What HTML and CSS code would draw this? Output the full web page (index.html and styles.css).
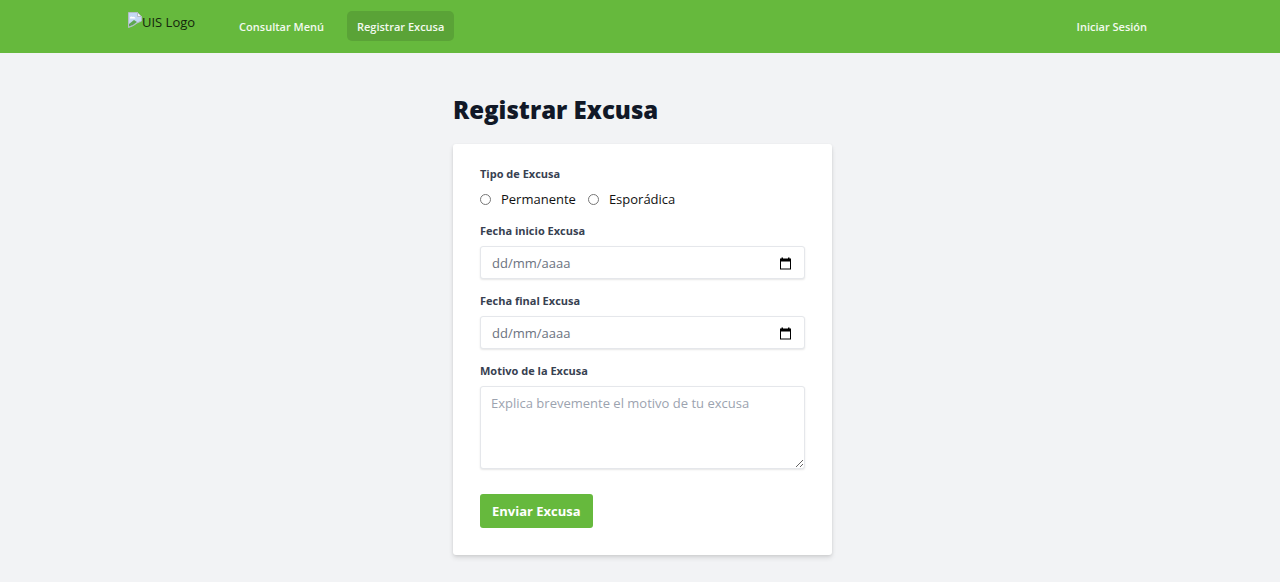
FILE: index.html
```html
<!DOCTYPE html>
<html lang="es">
<head>
<meta charset="utf-8">
<meta name="viewport" content="width=device-width, initial-scale=1">
<title>Registrar Excusa</title>
<link rel="stylesheet" href="styles.css">
</head>
<body>
<header class="header">
  <a class="logo" href="#">
    <svg class="logo-icon" viewBox="0 0 14 16" aria-hidden="true">
      <path d="M0.5 0.5H9.5L13.5 4.5V9L9 11L5.5 13.5L0.5 15.5Z" fill="#c4d8f5" stroke="#b5bdc5"/>
      <path d="M9.5 0.5V4.5H13.5Z" fill="#f4f7fa" stroke="#b5bdc5"/>
      <path d="M2 6.500a1.500 1.500 0 0 1 2.500-1.500a2 2 0 0 1 3 1.500Z" fill="#fff"/>
      <path d="M1 14.500V12L6 8L9 10L5 13Z" fill="#5ea651"/>
    </svg>
    <span>UIS Logo</span>
  </a>
  <nav class="nav">
    <a class="nav-link" href="#">Consultar Menú</a>
    <a class="nav-link nav-link-active" href="#" aria-current="page">Registrar Excusa</a>
  </nav>
  <a class="nav-link nav-login" href="#">Iniciar Sesión</a>
</header>
<main class="main">
  <h1 class="title">Registrar Excusa</h1>
  <form class="card">
    <fieldset class="field">
      <legend class="label">Tipo de Excusa</legend>
      <div class="options">
        <label class="option"><input class="radio" type="radio" name="tipo" value="permanente">Permanente</label>
        <label class="option"><input class="radio" type="radio" name="tipo" value="esporadica">Esporádica</label>
      </div>
    </fieldset>
    <div class="field">
      <label class="label" for="inicio">Fecha inicio Excusa</label>
      <div class="control date">
        <input class="date-input" id="inicio" type="text" placeholder="dd/mm/aaaa">
        <button class="date-button" type="button" aria-label="Abrir calendario de inicio">
          <svg class="date-icon" viewBox="0 0 13 13" aria-hidden="true"><path fill-rule="evenodd" d="M1 1.500H2.500V0.500H4V1.500H9V0.500H10.500V1.500H12V12.500H1ZM2 4.500V11.500H11V4.500Z"/></svg>
        </button>
      </div>
    </div>
    <div class="field">
      <label class="label" for="final">Fecha final Excusa</label>
      <div class="control date">
        <input class="date-input" id="final" type="text" placeholder="dd/mm/aaaa">
        <button class="date-button" type="button" aria-label="Abrir calendario final">
          <svg class="date-icon" viewBox="0 0 13 13" aria-hidden="true"><path fill-rule="evenodd" d="M1 1.500H2.500V0.500H4V1.500H9V0.500H10.500V1.500H12V12.500H1ZM2 4.500V11.500H11V4.500Z"/></svg>
        </button>
      </div>
    </div>
    <div class="field">
      <label class="label" for="motivo">Motivo de la Excusa</label>
      <textarea class="control reason" id="motivo" rows="3" placeholder="Explica brevemente el motivo de tu excusa"></textarea>
    </div>
    <button class="submit" type="submit">Enviar Excusa</button>
  </form>
</main>
</body>
</html>
```
FILE: styles.css
```css
* {
  box-sizing: border-box;
}

body {
  margin: 0;
  min-height: 100vh;
  background: #f2f3f5;
  color: #111;
  font: 13px/20px "Segoe UI", "Open Sans", "Noto Sans", sans-serif;
}

input,
textarea,
button {
  font: inherit;
}

.header {
  display: flex;
  align-items: center;
  padding: 11px 10% 12px;
  background: #66b93d;
}

.logo {
  display: flex;
  align-self: flex-start;
  padding-top: 1px;
  color: #14260c;
  text-decoration: none;
}

.logo-icon {
  width: 14px;
  height: 16px;
}

.nav {
  display: flex;
  gap: 13px;
  margin-left: 34px;
}

.nav-link {
  padding: 6px 10px 4px;
  border-radius: 5px;
  color: #f3faef;
  font-size: 11px;
  font-weight: 600;
  text-decoration: none;
}

.nav-link-active {
  background: #5aa337;
}

.nav-login {
  margin-left: auto;
  margin-right: -5px;
}

.main {
  max-width: 384px;
  margin: 0 auto;
  padding: 40px 0 27px 5px;
}

.title {
  margin: 0 0 17px;
  color: #111827;
  font-size: 24px;
  font-weight: 800;
  line-height: 34px;
}

.card {
  padding: 20px 27px 27px;
  border-radius: 3px;
  background: #fff;
  box-shadow: 0 3px 5px rgba(0, 0, 0, 0.1), 0 1px 3px rgba(0, 0, 0, 0.08);
}

.field {
  display: flex;
  flex-direction: column;
  margin: 0 0 12px;
  padding: 0;
  border: 0;
}

.label {
  margin-bottom: 5px;
  padding: 0;
  color: #374151;
  font-size: 11px;
  font-weight: 700;
}

.options {
  display: flex;
  gap: 12px;
}

.option {
  display: flex;
  align-items: center;
  gap: 10px;
}

.radio {
  width: 11px;
  height: 11px;
  margin: 0;
}

.control {
  width: 100%;
  border: 1px solid #e5e7eb;
  border-radius: 3px;
  background: #fff;
  box-shadow: 0 1px 2px rgba(0, 0, 0, 0.1);
}

.date {
  display: flex;
  align-items: center;
  padding: 6px 12px 5px 11px;
}

.date-input {
  flex: 1;
  min-width: 0;
  padding: 0;
  border: 0;
  outline: 0;
  background: none;
  color: #374151;
}

.date-input::placeholder {
  color: #6b7280;
}

.date-button {
  display: flex;
  padding: 0;
  border: 0;
  background: none;
  cursor: pointer;
}

.date-icon {
  width: 13px;
  height: 13px;
}

.reason {
  display: block;
  min-height: 83px;
  padding: 6px 10px;
  resize: vertical;
}

.reason::placeholder {
  color: #9ca3af;
}

.submit {
  display: block;
  margin-top: 25px;
  padding: 7px 12px;
  border: 0;
  border-radius: 3px;
  background: #66b93d;
  color: #fff;
  font-weight: 700;
  cursor: pointer;
}
```
